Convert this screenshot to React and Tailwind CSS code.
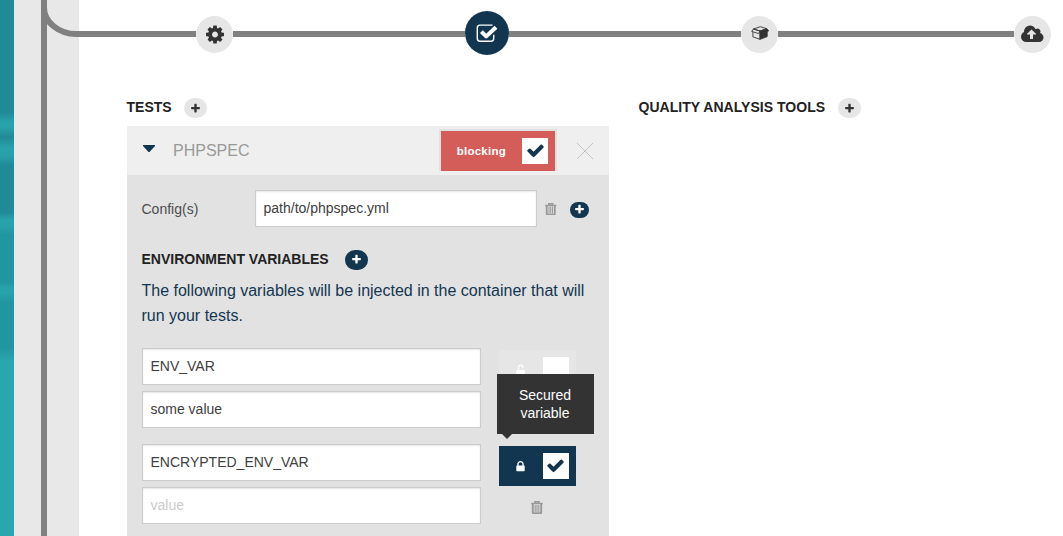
import React from "react";

const PLUS =
  "M1600 736v192q0 40-28 68t-68 28h-416v416q0 40-28 68t-68 28h-192q-40 0-68-28t-28-68v-416h-416q-40 0-68-28t-28-68v-192q0-40 28-68t68-28h416v-416q0-40 28-68t68-28h192q40 0 68 28t28 68v416h416q40 0 68 28t28 68z";
const CHECK =
  "M1671 566q0 40-28 68l-724 724-136 136q-28 28-68 28t-68-28l-136-136-362-362q-28-28-28-68t28-68l136-136q28-28 68-28t68 28l294 295 656-657q28-28 68-28t68 28l136 136q28 28 28 68z";
const GEAR =
  "M1024 896q0-106-75-181t-181-75-181 75-75 181 75 181 181 75 181-75 75-181zm512-109v222q0 12-8 23t-20 13l-185 28q-19 54-39 91 35 50 107 138 10 12 10 25t-9 23q-27 37-99 108t-94 71q-12 0-26-9l-138-108q-44 23-91 38-16 136-29 186-7 28-36 28h-222q-14 0-24.5-8.5t-11.5-21.5l-28-184q-49-16-90-37l-141 107q-10 9-25 9-14 0-25-11-126-114-165-168-7-10-7-23 0-12 8-23 15-21 51-66.5t54-70.5q-27-50-41-99l-183-27q-13-2-21-12.5t-8-23.5v-222q0-12 8-23t19-13l186-28q14-46 39-92-40-57-107-138-10-12-10-24 0-10 9-23 26-36 98.5-107.5t94.5-71.5q13 0 26 10l138 107q44-23 91-38 16-136 29-186 7-28 36-28h222q14 0 24.5 8.5t11.5 21.5l28 184q49 16 90 37l142-107q9-9 24-9 13 0 25 10 129 119 165 170 7 8 7 22 0 12-8 23-15 21-51 66.5t-54 70.5q26 50 41 98l183 28q13 2 21 12.5t8 23.5z";
const CLOUD =
  "M1280 864q0-14-9-23l-352-352q-9-9-23-9t-23 9l-351 351q-10 12-10 24 0 14 9 23t23 9h224v352q0 13 9.5 22.5t22.5 9.5h192q13 0 22.5-9.5t9.5-22.5v-352h224q13 0 22.5-9.5t9.5-22.5zm640 288q0 159-112.5 271.5t-271.5 112.5h-1088q-185 0-316.5-131.5t-131.5-316.5q0-130 70-240t188-165q-2-30-2-43 0-212 150-362t362-150q156 0 285.5 87t188.5 231q71-62 166-62 106 0 181 75t75 181q0 76-41 138 130 31 213.5 135.5t83.5 238.5z";
const LOCK =
  "M640 768h512v-192q0-106-75-181t-181-75-181 75-75 181v192zm832 96v576q0 40-28 68t-68 28h-960q-40 0-68-28t-28-68v-576q0-40 28-68t68-28h32v-192q0-184 132-316t316-132 316 132 132 316v192h32q40 0 68 28t28 68z";

function Glyph({ d, box = "0 0 1792 1792", className }) {
  return (
    <svg viewBox={box} fill="currentColor" className={`shrink-0 ${className}`}>
      <path d={d} />
    </svg>
  );
}

function Trash({ className }) {
  return (
    <svg viewBox="0 0 12 13" fill="none" stroke="currentColor" className={`shrink-0 ${className}`}>
      <path d="M.2 2.5h11.6M4 2V.7h4V2" strokeWidth="1.6" />
      <path d="M1.8 3v8.5q0 .7.7.7h7q.7 0 .7-.7V3" strokeWidth="1.9" />
      <path d="M4.2 4v7M6 4v7M7.8 4v7" strokeWidth="1.05" />
    </svg>
  );
}

function AddButton({ dark, className = "" }) {
  return (
    <button
      className={`flex h-5 w-[23px] items-center justify-center rounded-full ${
        dark ? "bg-[#133650] pb-px text-white" : "bg-[#e6e6e6] text-[#333333]"
      } ${className}`}
    >
      <Glyph d={PLUS} className="size-[11px]" />
    </button>
  );
}

function Field({ value, placeholder, className }) {
  return (
    <div
      className={`h-[37px] border border-[#cccccc] bg-white px-[7.5px] text-sm leading-[34px] shadow-[inset_0_1px_2px_rgba(0,0,0,0.1)] ${
        value ? "text-[#404040]" : "text-[#cccccc]"
      } ${className}`}
    >
      {value || placeholder}
    </div>
  );
}

function CheckBox({ checked, className = "" }) {
  return (
    <span className={`flex size-[26px] items-center justify-center bg-white text-[#133650] ${className}`}>
      {checked && <Glyph d={CHECK} className="h-[19px] w-[19px]" />}
    </span>
  );
}

function Node({ children }) {
  return (
    <div className="mt-4 flex size-[37px] shrink-0 items-center justify-center rounded-full bg-[#e6e6e6] text-[#333333]">
      {children}
    </div>
  );
}

function Timeline() {
  return (
    <div className="flex h-[55px] items-start">
      <div className="mt-[31px] h-1.5 w-[117px] bg-[#808080]" />
      <Node>
        <Glyph d={GEAR} box="0 0 1536 1792" className="h-[21px] w-[18px]" />
      </Node>
      <div className="mt-[31px] h-1.5 w-[232px] bg-[#808080]" />
      <div className="mt-[11px] flex size-11 shrink-0 items-center justify-center rounded-full bg-[#133650] text-white">
        <svg viewBox="0 0 22 20" fill="none" stroke="currentColor" className="h-5 w-[22px]">
          <path d="M16.5 2.1H4Q1.3 2.1 1.3 4.8v10.8q0 2.7 2.7 2.7h11q2.7 0 2.7-2.7v-3.8" strokeWidth="1.4" />
          <path d="M5.4 8.6l4.8 4.8L20 4.2" strokeWidth="4" strokeLinejoin="round" />
        </svg>
      </div>
      <div className="mt-[31px] h-1.5 w-[232px] bg-[#808080]" />
      <Node>
        <svg viewBox="0 0 18 14" fill="none" stroke="currentColor" strokeWidth=".9" strokeLinejoin="round" className="mb-[3px] h-3.5 w-[18px]">
          <path d="M2.4 3L9.3.7l6.4 2L9 5z" />
          <path d="M2.4 3L.7 5.4 7.6 7.6 9 5z" />
          <path d="M1.9 6v4.9L9 13.3V5.4" />
          <path d="M9 5l7-2.3L17.6 5l-1.4.6v5L9 13.3z" fill="currentColor" />
        </svg>
      </Node>
      <div className="mt-[31px] h-1.5 w-[236px] bg-[#808080]" />
      <Node>
        <Glyph d={CLOUD} box="0 0 1920 1792" className="mb-px h-[21px] w-[22.5px]" />
      </Node>
    </div>
  );
}

function SecureToggle({ locked }) {
  return (
    <div
      className={`flex h-10 w-[77px] items-center justify-end pr-[7px] ${
        locked ? "bg-[#133650] text-white" : "bg-[#e6e6e6] text-white"
      }`}
    >
      {locked ? (
        <Glyph d={LOCK} className="mt-px mr-4 size-[13px]" />
      ) : (
        <svg viewBox="0 0 12 12" fill="none" stroke="currentColor" className="mt-px mr-4 size-[13px] shrink-0">
          <path d="M4.2 6V3a2 2 0 0 1 4 0V4.2" strokeWidth="1.2" />
          <path d="M2 5.6h8v5.2H2z" fill="currentColor" stroke="none" />
        </svg>
      )}
      <CheckBox checked={locked} className="pr-[1.5px] pb-0.5" />
    </div>
  );
}

function TestPanel() {
  return (
    <section className="mt-[9px] w-[482px]">
      <header className="flex h-[49px] items-start bg-[#efefef]">
        <svg viewBox="0 0 12 7" className="mt-[19px] ml-4 h-[7px] w-3 text-[#133650]" fill="currentColor">
          <path d="M0 0h12v1L6.5 7h-1L0 1z" />
        </svg>
        <span className="mt-[13px] ml-[18px] w-[266px] text-base leading-6 text-[#999999]">PHPSPEC</span>
        <div className="mt-[3px] flex h-[42px] w-[118px] items-center justify-end border-2 border-b-0 border-[#e2e2e2] bg-[#d45d59] pr-[7px]">
          <span className="mt-px mr-4 text-[11.5px] font-bold tracking-[0.25px] text-white">blocking</span>
          <CheckBox checked className="pb-px" />
        </div>
        <svg viewBox="0 0 16 16" className="mt-[17px] ml-[19.5px] size-4 text-[#c4c4c4]" stroke="currentColor">
          <path d="M0 0l16 16M16 0L0 16" />
        </svg>
      </header>

      <div className="h-[361px] bg-[#e2e2e2] pt-[15px] pl-[15px]">
        <div className="flex h-[37px] items-center">
          <span className="-ml-[0.5px] w-[113.5px] text-sm leading-5 text-[#4d4d4d]">Config(s)</span>
          <Field value="path/to/phpspec.yml" className="w-[282px]" />
          <Trash className="mt-px ml-2 h-[12.5px] w-[11.5px] text-[#999999]" />
          <button className="mt-0.5 ml-[13.5px] flex h-4 w-[19px] items-center justify-center rounded-full bg-[#133650] text-white">
            <Glyph d={PLUS} className="size-[11px]" />
          </button>
        </div>

        <div className="mt-[22px] -ml-[0.5px] flex h-5 items-center">
          <h3 className="text-sm leading-5 font-bold text-[#222222]">ENVIRONMENT VARIABLES</h3>
          <AddButton dark className="mt-0.5 ml-[16.5px]" />
        </div>
        <p className="mt-[9px] -ml-[0.5px] w-[450px] text-base leading-[25px] text-[#133650]">
          The following variables will be injected in the container that will run your tests.
        </p>

        <div className="mt-5 flex gap-[18px]">
          <div className="flex flex-col gap-1.5">
            <Field value="ENV_VAR" className="w-[339px]" />
            <Field value="some value" className="w-[339px]" />
          </div>
          <div className="pt-0.5">
            <SecureToggle />
          </div>
        </div>

        <div className="mt-4 flex gap-[18px]">
          <div className="flex flex-col gap-1.5">
            <Field value="ENCRYPTED_ENV_VAR" className="w-[339px]" />
            <Field placeholder="value" className="w-[339px]" />
          </div>
          <div className="relative pt-0.5">
            <SecureToggle locked />
            <Trash className="mt-[15px] ml-8 h-[13px] w-3 text-[#999999]" />
            <div className="absolute bottom-[90px] -left-0.5 h-[60px] w-[97px] bg-[#333333] pt-3 pr-4 pl-[15px] text-center text-sm leading-[18px] text-white">
              Secured variable
              <svg viewBox="0 0 10 5" className="absolute top-full left-[5px] h-[5px] w-2.5 text-[#333333]" fill="currentColor">
                <path d="M0 0h10L5 5z" />
              </svg>
            </div>
          </div>
        </div>
      </div>
    </section>
  );
}

export default function App() {
  return (
    <div className="flex h-[536px] w-[1063px] overflow-hidden bg-white font-['Liberation_Sans',Arial,sans-serif]">
      <div className="w-3.5 shrink-0 bg-[linear-gradient(to_bottom,#208a97_0px,#208a97_112px,#26a3ab_122px,#26a3ab_127px,#208a96_137px,#26a3ab_148px,#26a0a9_156px,#208a97_166px,#208a97_212px,#26a3ab_220px,#26a3ab_226px,#2296a0_234px,#2296a0_282px,#26a3ab_288px,#26a3ab_294px,#2296a0_302px,#2296a0_348px,#27a8af_362px,#27a8af_536px)]" />
      <div className="flex w-[65px] shrink-0 bg-[#e8e8e8] pl-[27px]">
        <div className="w-1.5 bg-[#808080]" />
        <svg viewBox="0 0 32 40" className="h-10 w-8" fill="none" stroke="#808080" strokeWidth="6">
          <path d="M-3 8C-3 22 12 34 29 34h3" />
        </svg>
      </div>
      <main className="min-w-0 flex-1">
        <Timeline />
        <div className="flex pt-[42px] pl-12">
          <div className="w-[511.5px]">
            <div className="-ml-[0.5px] flex h-5 items-center">
              <h2 className="text-sm leading-5 font-bold text-[#222222]">TESTS</h2>
              <AddButton className="mt-0.5 ml-[12.5px]" />
            </div>
            <TestPanel />
          </div>
          <div className="flex h-5 items-center">
            <h2 className="text-sm leading-5 font-bold tracking-[0.03px] text-[#222222]">QUALITY ANALYSIS TOOLS</h2>
            <AddButton className="mt-0.5 ml-[13px]" />
          </div>
        </div>
      </main>
    </div>
  );
}
